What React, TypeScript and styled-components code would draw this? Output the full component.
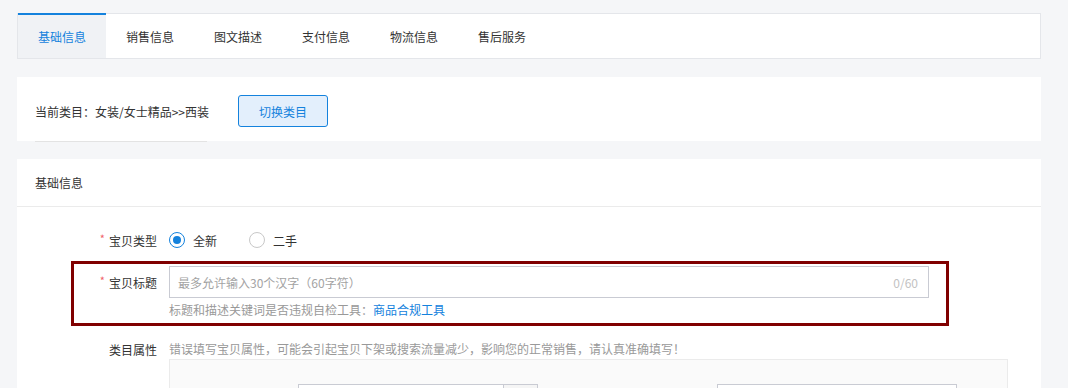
import React from 'react'
import styled, { createGlobalStyle } from 'styled-components'

const GlobalStyle = createGlobalStyle`
	body {
		margin: 0;
		background: #f5f6f8;
		font-family: "Noto Sans CJK SC", "Noto Sans", sans-serif;
		font-size: 12px;
		color: #333;
	}
	* { box-sizing: border-box; }
`

const BLUE = '#1482dd'

const Page = styled.div`
	width: 1041px;
	padding: 13px 0 0 17px;
`

const TabBar = styled.nav`
	display: flex;
	height: 46px;
	background: #fff;
	border: 1px solid #e4e6ea;
`

const Tab = styled.div<{ $active?: boolean }>`
	display: flex;
	align-items: center;
	padding: 0 20px;
	color: ${p => (p.$active ? BLUE : '#333')};
	background: ${p => (p.$active ? '#f0f2f5' : 'transparent')};
	${p => p.$active && `margin-top: -1px; border-top: 2px solid ${BLUE};`}
`

const CategoryCard = styled.section`
	display: flex;
	align-items: center;
	gap: 29px;
	height: 64px;
	margin-top: 18px;
	padding: 4px 18px 0;
	background: #fff;
`

const SwitchButton = styled.button`
	width: 90px;
	height: 32px;
	border: 1px solid ${BLUE};
	border-radius: 3px;
	background: #e3effc;
	color: ${BLUE};
	font: inherit;
`

const Underline = styled.div`
	width: 172px;
	height: 1px;
	margin-left: 18px;
	background: #e3e3e3;
`

const Card = styled.section`
	margin-top: 17px;
	background: #fff;
`

const CardHeader = styled.header`
	display: flex;
	align-items: center;
	height: 48px;
	padding-left: 18px;
	border-bottom: 1px solid #ebebeb;
`

const CardBody = styled.div`
	padding-top: 17px;
	padding-bottom: 40px;
`

const Row = styled.div<{ $labelWidth?: number }>`
	display: grid;
	grid-template-columns: ${p => p.$labelWidth ?? 152}px 1fr;
	align-items: start;
`

const Label = styled.div<{ $height?: number }>`
	display: flex;
	align-items: center;
	justify-content: flex-end;
	height: ${p => p.$height ?? 18}px;
	padding-right: 12px;
	color: #333;
`

const Required = styled.span`
	color: #f0626a;
	margin: -4px 4px 0 0;
	font-size: 11px;
`

const RadioGroup = styled.div`
	display: flex;
	align-items: center;
	height: 32px;
	gap: 32px;
`

const RadioOption = styled.label`
	display: flex;
	align-items: center;
	gap: 8px;
`

const Radio = styled.span<{ $checked?: boolean }>`
	display: inline-flex;
	align-items: center;
	justify-content: center;
	width: 16px;
	height: 16px;
	border-radius: 50%;
	border: 1px solid ${p => (p.$checked ? BLUE : '#c8c8c8')};
	&::after {
		content: '';
		width: 8px;
		height: 8px;
		border-radius: 50%;
		background: ${BLUE};
		display: ${p => (p.$checked ? 'block' : 'none')};
	}
`

const Frame = styled.div`
	margin: 5px 92px 0 54px;
	padding: 2px 17px 4px 0;
	border: 3px solid #800000;
`

const InputBox = styled.div<{ $width?: number }>`
	display: flex;
	align-items: center;
	height: 32px;
	${p => p.$width && `width: ${p.$width}px;`}
	border: 1px solid #c9cbd3;
	background: #fff;
	padding: 0 10px 0 8px;
`

const TextInput = styled.input`
	flex: 1;
	min-width: 0;
	border: 0;
	outline: none;
	padding: 0;
	font: inherit;
	color: #333;
	&::placeholder { color: #a3a3a3; }
`

const Counter = styled.span`
	color: #c2c2c2;
`

const Help = styled.div`
	margin-top: 3px;
	line-height: 18px;
	color: #999;
`

const Notice = styled(Help)`
	margin-top: 0;
`

const HelpLink = styled.a`
	color: ${BLUE};
	text-decoration: none;
`

const AttrRow = styled(Row)`
	margin-top: 14px;
`

const AttrBox = styled.div`
	width: 839px;
	height: 180px;
	margin-top: 1px;
	padding-top: 24px;
	border: 1px solid #ebebeb;
	background: #fafafa;
`

const AttrGrid = styled.div`
	display: grid;
	grid-template-columns: 419px 1fr;
`

const AttrField = styled.div`
	display: flex;
	align-items: center;
	padding-left: 128px;
`

const Addon = styled.span`
	width: 34px;
	height: 32px;
	border: 1px solid #c9cbd3;
	border-left: 0;
	background: #f5f5f5;
`

const tabs = ['基础信息', '销售信息', '图文描述', '支付信息', '物流信息', '售后服务']

export default function App() {
	return (
		<Page>
			<GlobalStyle />
			{/* tabs */}
			<TabBar>
				{tabs.map((t, i) => (
					<Tab key={t} $active={i === 0}>{t}</Tab>
				))}
			</TabBar>

			{/* current category */}
			<CategoryCard>
				<span>当前类目：女装/女士精品&gt;&gt;西装</span>
				<SwitchButton>切换类目</SwitchButton>
			</CategoryCard>
			<Underline />

			{/* basic info */}
			<Card>
				<CardHeader>基础信息</CardHeader>
				<CardBody>
					<Row>
						<Label $height={32}><Required>*</Required>宝贝类型</Label>
						<RadioGroup>
							<RadioOption><Radio $checked />全新</RadioOption>
							<RadioOption><Radio />二手</RadioOption>
						</RadioGroup>
					</Row>

					<Frame>
						<Row $labelWidth={95}>
							<Label $height={32}><Required>*</Required>宝贝标题</Label>
							<div>
								<InputBox>
									<TextInput placeholder="最多允许输入30个汉字（60字符）" />
									<Counter>0/60</Counter>
								</InputBox>
								<Help>
									标题和描述关键词是否违规自检工具：<HelpLink href="#">商品合规工具</HelpLink>
								</Help>
							</div>
						</Row>
					</Frame>

					<AttrRow>
						<Label>类目属性</Label>
						<div>
							<Notice>
								错误填写宝贝属性，可能会引起宝贝下架或搜索流量减少，影响您的正常销售，请认真准确填写！
							</Notice>
							<AttrBox>
								<AttrGrid>
									<AttrField>
										<InputBox $width={206} />
										<Addon />
									</AttrField>
									<AttrField>
										<InputBox $width={240} />
									</AttrField>
								</AttrGrid>
							</AttrBox>
						</div>
					</AttrRow>
				</CardBody>
			</Card>
		</Page>
	)
}
